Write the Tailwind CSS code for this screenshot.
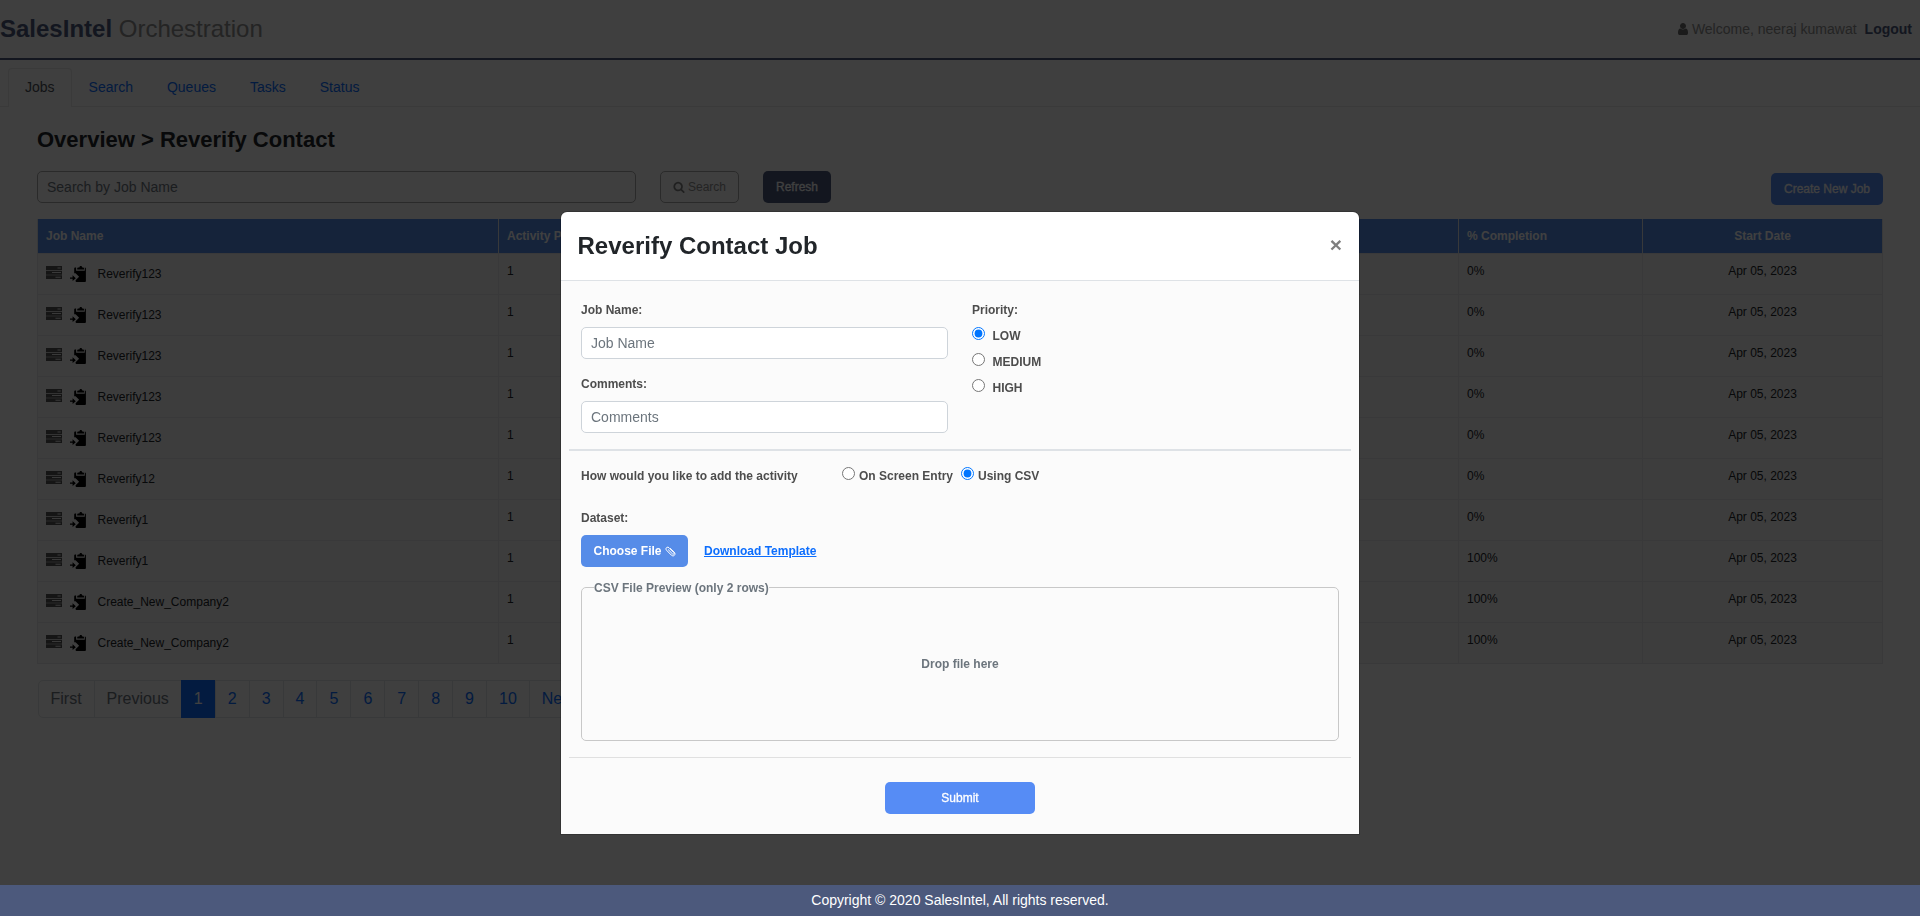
<!DOCTYPE html>
<html lang="en">
<head>
<meta charset="utf-8">
<title>SalesIntel Orchestration</title>
<script src="https://cdn.jsdelivr.net/npm/@tailwindcss/browser@4"></script>
</head>
<body class="h-[916px] overflow-hidden bg-[#f9f9f9] font-['Liberation_Sans',Arial,sans-serif] text-sm leading-[21px] text-[#212529]">
<svg class="hidden">
  <symbol id="tasks" viewBox="0 0 16 13">
    <path fill="#555" d="M0 0h16v4H0zM0 4.700h16v4H0zM0 9.300h16v3.700H0z"/>
    <path fill="#e4e4e4" d="M11.500 1.400h3.200v1h-3.200zM6 6.100h9v1H6zM9.500 10.800h5.200v1H9.500z"/>
  </symbol>
  <symbol id="clip" viewBox="0 0 16 16">
    <path d="M7.200 3.500V2.500a1 1 0 0 1 1-1h4.800a1 1 0 0 1 1 1v1zM10 0h1.500l.8 1.500h-3z"/>
    <path d="M4.200 2.400q0-.9.9-.9h1v3.200h8.700v-3.200q1.100 0 1.100.9v12.700q0 .9-.9.9H6.500q-.9 0-.9-.9v-.9l3.500-3.400-3.500-3.500h-1.400z"/>
    <path d="M0 11.600h2.600V9.300l3.200 2.900-3.200 2.900v-2.300H0z"/>
  </symbol>
</svg>

<header class="flex h-[60px] items-center justify-between border-b-2 border-[#4c597c] pr-2">
  <div class="text-2xl leading-9 text-[#8f8f8f]"><b class="text-[#4c597c]">SalesIntel</b> Orchestration</div>
  <div class="flex items-center text-[#8f8f8f]">
    <svg class="mr-[3px] h-[14px] w-[12px]" viewBox="128 0 1536 1792" fill="#6b6b6b"><path d="M1536 1399q0 109-62.500 187t-150.500 78h-854q-88 0-150.500-78t-62.500-187q0-85 8.500-160.500t31.500-152 58.500-131 94-89 134.500-34.500q131 128 313 128t313-128q76 0 134.500 34.500t94 89 58.500 131 31.500 152 8.500 160.500zm-256-887q0 159-112.500 271.500t-271.500 112.500-271.500-112.500-112.500-271.500 112.500-271.500 271.500-112.500 271.500 112.500 112.500 271.500z"/></svg>
    <span>Welcome, neeraj kumawat</span><b class="ml-2 text-[#4c597c]">Logout</b>
  </div>
</header>

<nav class="flex h-[47px] items-end border-b border-[#e6e6e6] pl-2 text-[#0d6efd]">
  <a class="-mb-px h-[39px] rounded-t border border-b-0 border-[#e6e6e6] bg-[#f9f9f9] px-4 py-2 text-[#495057]">Jobs</a>
  <a class="h-[38px] px-[17px] pt-[9px]">Search</a>
  <a class="h-[38px] px-[17px] pt-[9px]">Queues</a>
  <a class="h-[38px] px-[17px] pt-[9px]">Tasks</a>
  <a class="h-[38px] px-[17px] pt-[9px]">Status</a>
</nav>

<main class="px-[37px] pt-5">
  <h1 class="h-11 text-[22px] leading-[26px] font-bold">Overview &gt; Reverify Contact</h1>
  <div class="flex h-12 items-start text-xs">
    <input class="h-8 w-[599px] rounded-[5px] border border-[#a8a8a8] px-[9px] text-sm placeholder:text-[#6c757d]" placeholder="Search by Job Name">
    <button class="ml-6 flex h-8 w-[79px] items-center justify-center rounded-[5px] border border-[#a8a8a8] text-[#909090]">
      <svg class="mr-[3px] size-3" viewBox="0 0 1792 1792" fill="#808080"><path d="M1216 832q0-185-131.500-316.500t-316.500-131.500-316.500 131.500-131.500 316.500 131.500 316.500 316.500 131.500 316.500-131.500 131.500-316.500zm512 832q0 52-38 90t-90 38q-54 0-90-38l-343-342q-179 124-399 124-143 0-273.500-55.500t-225-150-150-225-55.500-273.500 55.500-273.500 150-225 225-150 273.500-55.500 273.500 55.500 225 150 150 225 55.500 273.500q0 220-124 399l343 343q37 37 37 90z"/></svg>Search</button>
    <button class="ml-6 h-8 w-[68px] rounded-[5px] bg-[#4c597c] text-white [-webkit-text-stroke:0.3px]">Refresh</button>
    <button class="mt-0.5 ml-auto h-8 w-28 rounded-[5px] bg-[#548cf4] text-white [-webkit-text-stroke:0.3px]">Create New Job</button>
  </div>

  <table class="w-[1845px] table-fixed border-collapse text-xs leading-[18px]">
    <colgroup><col class="w-[461px]"><col class="w-[960px]"><col class="w-[184px]"><col class="w-[240px]"></colgroup>
    <thead class="bg-[#548ce8] text-left text-white">
      <tr class="h-[34px] *:border-x *:border-[#dee2e6] *:px-2">
        <th>Job Name</th><th>Activity P</th><th>% Completion</th><th class="text-center">Start Date</th>
      </tr>
    </thead>
    <tbody id="rows"></tbody>
  </table>

  <div class="mt-4 ml-[1.5px] flex h-[38px] w-max text-base leading-5 text-[#0d6efd] *:-ml-px *:border *:border-[#e0e3e6] *:px-3 *:py-2">
    <span class="rounded-l-[5px] text-[#6c757d]">First</span><span class="text-[#6c757d]">Previous</span><span class="border-[#0d6efd]! bg-[#0d6efd] text-white">1</span><span>2</span><span>3</span><span>4</span><span>5</span><span>6</span><span>7</span><span>8</span><span>9</span><span>10</span><span class="rounded-r-[5px]">Next</span>
  </div>
</main>

<div class="fixed inset-0 bg-black/75"></div>

<section class="fixed top-[211px] left-[560px] w-[800px] rounded-t-[7px] border border-black/20 text-xs leading-[18px] font-bold text-[#4d4d4d]">
  <header class="flex h-[69px] items-center justify-between rounded-t-md border-b border-[#dee2e6] bg-white pr-[17px] pl-[16.5px]">
    <h2 class="text-2xl leading-9 text-[#212529]">Reverify Contact Job</h2>
    <button class="mb-[3px] text-[21px] leading-none text-[#7f7f7f]">×</button>
  </header>
  <div class="bg-[#fbfbfb] px-2 pb-5">
    <div class="flex gap-6 px-3 pt-5 pb-4">
      <div class="flex w-[367px] flex-col">
        <label>Job Name:</label>
        <input class="mt-2 h-8 rounded-[5px] border border-[#ced4da] bg-white px-[9px] text-sm font-normal placeholder:text-[#6c757d]" placeholder="Job Name">
        <label class="mt-4">Comments:</label>
        <input class="mt-2 h-8 rounded-[5px] border border-[#ced4da] bg-white px-[9px] text-sm font-normal placeholder:text-[#6c757d]" placeholder="Comments">
      </div>
      <div class="flex flex-col gap-2">
        <span>Priority:</span>
        <label class="flex items-start gap-[7.5px]"><input type="radio" name="priority" class="m-0 size-[13px]" checked>LOW</label>
        <label class="flex items-start gap-[7.5px]"><input type="radio" name="priority" class="m-0 size-[13px]">MEDIUM</label>
        <label class="flex items-start gap-[7.5px]"><input type="radio" name="priority" class="m-0 size-[13px]">HIGH</label>
      </div>
    </div>
    <hr class="border-t-2 border-[#dee2e6]">
    <div class="flex h-[58px] items-start px-3 pt-4">
      <span class="w-[261px]">How would you like to add the activity</span>
      <label class="flex w-[119px] items-start gap-1"><input type="radio" name="mode" class="m-0 size-[13px]">On Screen Entry</label>
      <label class="flex items-start gap-1"><input type="radio" name="mode" class="m-0 size-[13px]" checked>Using CSV</label>
    </div>
    <div class="px-3">
      <div>Dataset:</div>
      <div class="mt-2 flex items-center gap-4">
        <button class="flex h-8 w-[107px] items-center justify-center gap-[3px] rounded-[5px] bg-[#568ce8] text-white">Choose File
          <svg class="size-[11px]" viewBox="0 0 11 11" fill="none" stroke="#fff" stroke-width="1" stroke-linecap="round"><path d="M3.300 3.700l4.200 4.200c1 1 2.300-.3 1.300-1.300L4 1.700C2.300 0 -.2 2.500 1.500 4.200l4.800 4.900c2.200 2.200 5-.6 3-2.900L5.300 2.500"/></svg>
        </button>
        <a class="text-[#0d6efd] underline">Download Template</a>
      </div>
      <fieldset class="mt-3 h-[162px] rounded-[5px] border border-[#c8c8c8] pl-3 text-[#6c757d]">
        <legend class="h-[17px]">CSV File Preview (only 2 rows)</legend>
        <div class="-ml-3 pt-[59px] text-center">Drop file here</div>
      </fieldset>
    </div>
    <hr class="mt-4 mb-6 border-[#e0e0e0]">
    <button class="mx-auto block h-8 w-[150px] rounded-[5px] bg-[#568cf5] font-normal text-white [-webkit-text-stroke:0.3px]">Submit</button>
  </div>
</section>

<footer class="fixed inset-x-0 bottom-0 h-[31px] bg-[#4c597c] pt-[5px] text-center text-white">Copyright © 2020 SalesIntel, All rights reserved.</footer>

<script>
  const jobs = [
    ["Reverify123", "0%"], ["Reverify123", "0%"], ["Reverify123", "0%"], ["Reverify123", "0%"], ["Reverify123", "0%"],
    ["Reverify12", "0%"], ["Reverify1", "0%"], ["Reverify1", "100%"], ["Create_New_Company2", "100%"], ["Create_New_Company2", "100%"]
  ];
  document.getElementById("rows").innerHTML = jobs.map(([name, done]) => `
    <tr class="h-[41px] odd:bg-[#f1f1f1] even:bg-[#f4f4f4] *:border *:border-[#e3e4e6] *:px-2 *:align-top *:pt-2">
      <td><div class="flex items-start pt-[3px]"><svg class="mt-px h-[13px] w-4"><use href="#tasks"/></svg><svg class="mt-px mr-[11.5px] ml-2 size-4"><use href="#clip"/></svg>${name}</div></td>
      <td>1</td><td>${done}</td><td class="text-center">Apr 05, 2023</td>
    </tr>`).join("");
</script>
</body>
</html>
